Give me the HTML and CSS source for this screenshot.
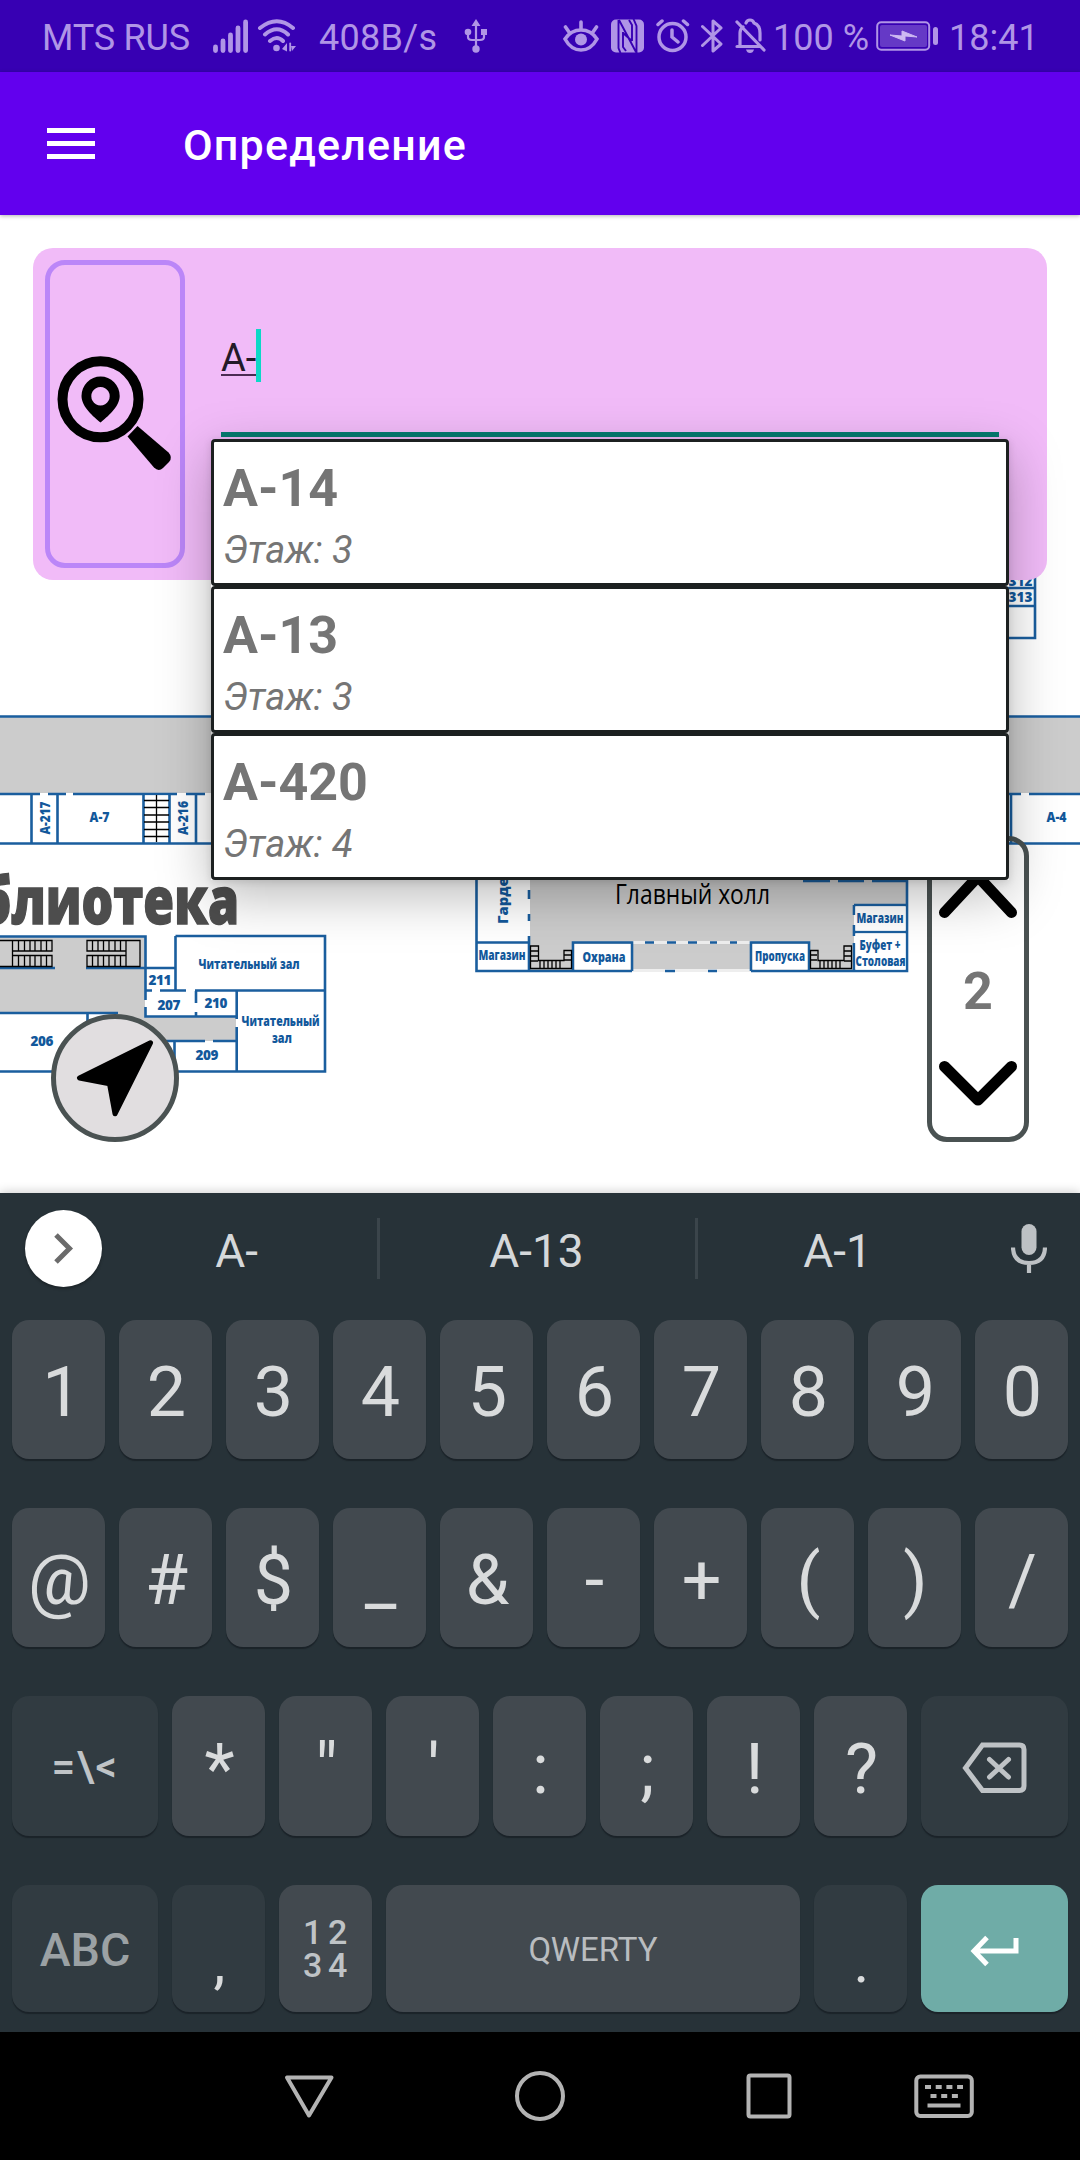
FILE: index.html
```html
<!DOCTYPE html>
<html lang="ru">
<head>
<meta charset="utf-8">
<title>Определение</title>
<link rel="stylesheet" href="styles.css">
</head>
<body>
<div class="phone">
  <header class="status">
    <span class="carrier">MTS RUS</span>
    <svg class="signal" width="36" height="34" viewBox="0 0 36 34"><g stroke="currentColor" stroke-width="4.8" stroke-linecap="round"><path d="M2.5 28v3.5M10 22v9.5M17.5 16v15.500M25 9v22.500M32.600 3v28.500"/></g></svg>
    <svg class="wifi" width="40" height="34" viewBox="0 0 40 34" fill="none" stroke="currentColor" stroke-width="4" stroke-linecap="round"><path d="M3 9Q20 -4.500 36 9M8 15.500Q20 5 31 15.500M13 22Q20 16 26 22"/><circle cx="19.500" cy="29" r="3.300" fill="currentColor" stroke="none"/><path d="M25 30l5-6v8.500zM34 24v8.500M34 27l5 0-4 5z" fill="currentColor" stroke="none"/><path d="M33.200 24.500v7" stroke-width="1.800"/></svg>
    <span class="speed">408B/s</span>
    <svg class="usb" width="24" height="36" viewBox="0 0 24 36" fill="none" stroke="currentColor" stroke-width="2.200"><path d="M12 5v25M4 14v5q0 3 4 3h8q4 0 4-3v-5"/><path d="M12 1l4.500 7h-9zM17 11h6v6h-6z" fill="currentColor" stroke="none"/><circle cx="4" cy="14" r="3.300" fill="currentColor" stroke="none"/><circle cx="12" cy="31" r="3.700" fill="currentColor" stroke="none"/></svg>
    <svg class="eye" width="36" height="34" viewBox="0 0 36 34" fill="none" stroke="currentColor" stroke-width="3.600" stroke-linecap="round"><path d="M2 20Q8 11 18 11t16 9Q28 31 18 31T2 20zM18 10V3M6 13L2.500 8M30 13l3.500-5"/><circle cx="18" cy="20.500" r="6" fill="currentColor" stroke="none"/></svg>
    <svg class="nfc" width="33" height="34" viewBox="0 0 33 34"><rect y=".5" width="33" height="33" rx="5" fill="currentColor"/><path d="M7.500 1V29L9.500 34M25.500 34V7L22.500 0M8 1L25 33M12 13V28L15 32M21 22V6L18 1M12 14L21 22" fill="none" stroke="#3700b3" stroke-width="1.900"/></svg>
    <svg class="alarm" width="34" height="34" viewBox="0 0 34 34" fill="none" stroke="currentColor" stroke-width="3.500" stroke-linecap="round"><circle cx="16.500" cy="18" r="13.500"/><path d="M16 11v7l6 5M2 5.500l4-3.500M31.500 5.500L27.500 2"/></svg>
    <svg class="bt" width="22" height="36" viewBox="0 0 22 36" fill="none" stroke="currentColor" stroke-width="3"><path d="M1.500 8.500L20 26l-8 7V3l8 7L1.500 27.500" stroke-linejoin="round" stroke-linecap="round"/></svg>
    <svg class="bell" width="32" height="36" viewBox="0 0 32 36" fill="none" stroke="currentColor" stroke-width="3.200" stroke-linecap="round"><path d="M2 4l27 28M2 28.500h22M5 27V15q0-4 3-6M11 5q1-3 4-3t4 3q6 2 6 10v7"/><path d="M11 31.500h8q-1 3.500-4 3.500t-4-3.500z" fill="currentColor" stroke="none"/></svg>
    <span class="percent">100 %</span>
    <svg class="battery" width="63" height="32" viewBox="0 0 63 32"><rect x="1.200" y="2.200" width="52" height="27.600" rx="4" fill="none" stroke="currentColor" stroke-width="2"/><rect x="4" y="5" width="47" height="22" rx="2" fill="currentColor" opacity=".38"/><path d="M14 15l12 1 0-5 15 6-12-1 0 5z" fill="#cdb9f2" stroke="#cdb9f2"/><rect x="57" y="7" width="5" height="18" rx="2.500" fill="currentColor"/></svg>
    <span class="clock">18:41</span>
  </header>

  <div class="toolbar">
    <div class="burger"><i></i><i></i><i></i></div>
    <h1>Определение</h1>
  </div>

  <main class="stage">
    <svg class="map" width="1080" height="978" viewBox="0 215 1080 978">
      <rect x="0" y="717" width="1080" height="76" class="hall"/>
      <rect x="0" y="937" width="145" height="76" class="hall"/>
      <path d="M118 1010h27v7h91v24H118z" class="hall"/>
      <path d="M530 870h377v35h-53v66H530z" class="hall"/>
      <path d="M632 970.500h119M632 942.500h119" stroke="#eee" stroke-width="3"/>
      <path d="M477.500 870h50.500v72h-50.500z" fill="#fff"/>
      <g class="wall">
        <path d="M0 716.500H1080M0 843.500H1080M0 794H40M48 794H66M73 794H177M186 794H205M1000 794H1021M1029 794H1080M31.500 794V843M57.500 794V843M143.500 794V843M169.500 794V843M196 794V843M1011 794V843"/>
        <path d="M1000 588H1035M1000 606H1035M1000 638H1035V570"/>
        <path d="M0 936.500H145.500V1000M145.500 1007V1016.500H236M0 968H55M86 968H175M175.500 936H325V1071.500H0M175.500 936V990.500M145 990.500H152M160 990.500H186M195 990.500H325M196 991V1003M196 1012V1016M236.700 991V1019M236.700 1027V1071M0 1013H118M87.500 1013V1071M165 1041H205M213 1041H236M174.500 1041V1071"/>
        <path d="M476.500 870V971H632M529 890V899M529 914V921M529 936V971M476 942.500H529M573 971V942.500H632V971M751 971V942.500H809V971M751 971H907V870M854 905H907M854 932H907M854 905V915M854 925V936M854 943V971"/>
        <path d="M645 942.500h9M667 942.500h9M688 942.500h9M710 942.500h7M730 942.500h7M665 971h10M708 971h9M803 881h27M838 881h26M872 881h35"/>
      </g>
      <path d="M574.500 944h56v25.500h-56zM752.500 944h55v25.500h-55zM855.500 906.500h50v24h-50zM855.500 933.500h50v36h-50zM145 795.500h23v46.500h-23z" fill="#fff"/>
      <g class="stair">
        <path d="M156.500 795V842M144 800.500H169M144 807.500H169M144 815H169M144 822H169M144 829.500H169M144 836.500H169"/>
        <path d="M0 940.500H52V951H12.500V940M12.500 951V967M12.500 955.500H52V966.500H0M18.500 940v11M24.500 940v11M30 940v11M35 940v11M41 940v11M46.500 940v11M18.500 955v11M24.500 955v11M30 955v11M35 955v11M41 955v11M46.500 955v11"/>
        <path d="M126 951H87V940.500H140V966.500H87V955.500H126M126 940V967M92.500 940v11M98 940v11M103.500 940v11M109 940v11M115 940v11M120.500 940v11M92.500 955v11M98 955v11M103.500 955v11M109 955v11M115 955v11M120.500 955v11"/>
        <path d="M530.500 968.500V946H538.500V960.500H564V950.500H571.500V968.500zM530 951h8M530 956h8M530 961h8M564 955h7M564 960h7M540 960v8M544 960v8M548 960v8M552 960v8M556 960v8M560 960v8"/>
        <path d="M810.500 968.500V950.500H818V960.500H844V946H851.500V968.500zM810 955h7M810 960h7M844 951h7M844 956h7M844 961h7M820 960v8M824 960v8M828 960v8M832 960v8M836 960v8M840 960v8"/>
      </g>
      <g class="room">
        <text x="44.500" y="823" textLength="33" lengthAdjust="spacingAndGlyphs" transform="rotate(-90 44.500 818)">А-217</text>
        <text x="182.500" y="823" textLength="34" lengthAdjust="spacingAndGlyphs" transform="rotate(-90 182.500 818)">А-216</text>
        <text x="99.500" y="821.500" textLength="20" lengthAdjust="spacingAndGlyphs">А-7</text>
        <text x="1056.500" y="822" textLength="20" lengthAdjust="spacingAndGlyphs">А-4</text>
        <text x="1020.500" y="585.500" textLength="24">312</text>
        <text x="1020.500" y="601.500" textLength="24">313</text>
        <text x="249" y="969" textLength="101" lengthAdjust="spacingAndGlyphs">Читательный зал</text>
        <text x="160" y="985" textLength="23">211</text>
        <text x="169" y="1009.500" textLength="23">207</text>
        <text x="216" y="1008" textLength="23">210</text>
        <text x="280.500" y="1026" textLength="78" lengthAdjust="spacingAndGlyphs">Читательный</text>
        <text x="282" y="1043" textLength="20" lengthAdjust="spacingAndGlyphs">зал</text>
        <text x="207" y="1060" textLength="23">209</text>
        <text x="42" y="1045.500" textLength="23">206</text>
        <text x="502" y="960" textLength="47" lengthAdjust="spacingAndGlyphs">Магазин</text>
        <text x="604" y="962" textLength="43" lengthAdjust="spacingAndGlyphs">Охрана</text>
        <text x="780" y="961" textLength="50" lengthAdjust="spacingAndGlyphs">Пропуска</text>
        <text x="880" y="923" textLength="47" lengthAdjust="spacingAndGlyphs">Магазин</text>
        <text x="880" y="950" textLength="41" lengthAdjust="spacingAndGlyphs">Буфет +</text>
        <text x="880.500" y="966" textLength="50" lengthAdjust="spacingAndGlyphs">Столовая</text>
        <text class="wardrobe" transform="translate(507.500 924) rotate(-90)" textLength="75" lengthAdjust="spacingAndGlyphs">Гардероб</text>
      </g>
      <text class="lobby" x="692.500" y="904" textLength="155" lengthAdjust="spacingAndGlyphs">Главный холл</text>
      <text class="library" x="239" y="924" textLength="260" lengthAdjust="spacingAndGlyphs">блиотека</text>
    </svg>

    <section class="search">
      <button class="find">
        <svg width="140" height="308" viewBox="45 260 140 308"><circle cx="100.500" cy="399.300" r="38" fill="none" stroke="#000" stroke-width="10"/><path fill-rule="evenodd" d="M100.500 422.500C94 417 81.500 407 81.500 396a19 19.300 0 0 1 38.200 0C119.700 407 107 417 100.500 422.500zM100.500 387a9.200 9.200 0 1 0 .01 0z"/><path d="M137.500 426L127.500 436.500L154 467.500Q158.500 472 163 468L169 462Q173 457.500 168.500 452.500z"/></svg>
      </button>
      <div class="field"><span class="typed">А-</span><i class="caret"></i></div>
    </section>

    <ul class="options">
      <li><b>А-14</b><em>Этаж: 3</em></li>
      <li><b>А-13</b><em>Этаж: 3</em></li>
      <li><b>А-420</b><em>Этаж: 4</em></li>
    </ul>

    <button class="locate"><svg width="128" height="128" viewBox="51 1013.700 128 128"><path d="M150.500 1042.500L79.500 1077.700L109.500 1083.500L115 1113.500z" stroke="#000" stroke-width="5" stroke-linejoin="round"/></svg></button>

    <div class="floors">
      <svg width="78" height="52" viewBox="0 0 78 52"><path d="M5.500 44.500L39 8.500L72.500 44.500"/></svg>
      <b>2</b>
      <svg width="78" height="52" viewBox="0 0 78 52"><path d="M5.500 7.500L39 41L72.500 7.500"/></svg>
    </div>
  </main>

  <section class="keyboard">
    <div class="suggest">
      <span class="expand"><svg width="77" height="77" viewBox="0 0 77 77"><path d="M31 25L44.500 38.500L31 52" fill="none" stroke="#6b6b6b" stroke-width="5"/></svg></span>
      <span class="word w1">A-</span><i></i><span class="word w2">A-13</span><i></i><span class="word w3">A-1</span>
      <svg class="mic" width="36" height="50" viewBox="0 0 36 50"><rect x="10.500" y="0" width="15" height="31" rx="7.500" fill="#bdc1c4"/><path d="M2 23.500Q2.500 39 18 39T34 23.500M18 39V49" fill="none" stroke="#bdc1c4" stroke-width="4.200"/></svg>
    </div>
    <div class="row"><kbd class="one">1</kbd><kbd>2</kbd><kbd>3</kbd><kbd>4</kbd><kbd>5</kbd><kbd>6</kbd><kbd>7</kbd><kbd>8</kbd><kbd>9</kbd><kbd>0</kbd></div>
    <div class="row"><kbd>@</kbd><kbd>#</kbd><kbd>$</kbd><kbd>_</kbd><kbd>&amp;</kbd><kbd>-</kbd><kbd>+</kbd><kbd>(</kbd><kbd>)</kbd><kbd>/</kbd></div>
    <div class="row row3"><kbd class="wide dim sym">=\&lt;</kbd><kbd>*</kbd><kbd>"</kbd><kbd>'</kbd><kbd>:</kbd><kbd>;</kbd><kbd>!</kbd><kbd>?</kbd><kbd class="wide dim icon"><svg width="66" height="52" viewBox="0 0 66 52" fill="none" stroke="#bfc3c6" stroke-width="5"><path d="M20.500 3H57.500Q62 3 62 7.500V44Q62 48.500 57.500 48.500H20.500L3.500 26zM27.500 17.500L46.500 35M46.500 17.500L27.500 35" stroke-linecap="round"/></svg></kbd></div>
    <div class="row row4"><kbd class="wide dim abc">ABC</kbd><kbd class="dim punct">,</kbd><kbd class="nums"><span>1</span><span>2</span><span>3</span><span>4</span></kbd><kbd class="space">QWERTY</kbd><kbd class="dim punct">.</kbd><kbd class="wide enter icon"><svg width="50" height="32" viewBox="0 0 50 32" fill="none" stroke="#fff" stroke-width="5"><path d="M17 2.500L4 16L17 29.500M4 16H46V3"/></svg></kbd></div>
  </section>

  <nav class="nav">
    <svg width="1080" height="128" viewBox="0 2032 1080 128" fill="none" stroke="#b3b3b3" stroke-width="4" stroke-linejoin="round"><path d="M287 2077.500H331.500L309 2115.500z"/><circle cx="540" cy="2096" r="23"/><rect x="748.500" y="2075.500" width="41" height="41" rx="2"/><rect x="916.300" y="2076.500" width="55.500" height="39.500" rx="4"/><path d="M925 2087h38M930.500 2096h29" stroke-dasharray="6 4.700"/><path d="M927.500 2105.500h33"/></svg>
  </nav>
</div>
</body>
</html>
```
FILE: styles.css
```css
* { box-sizing: border-box; }
body { margin: 0; font-family: Roboto, "Noto Sans", sans-serif; }
button { padding: 0; border: 0; background: none; }
svg { display: block; flex: none; }
.phone { width: 1080px; height: 2160px; display: flex; flex-direction: column; overflow: hidden; background: #fff; }

.status { height: 72px; flex: none; background: #3700b3; color: #b095e6; display: flex; align-items: center; padding-left: 42px; font-size: 36px; line-height: 72px; white-space: nowrap; }
.status span { padding-top: 2px; height: 72px; flex: none; }
.carrier { width: 171px; letter-spacing: -.2px; }
.wifi { margin-left: 8px; }
.speed { margin-left: 22px; width: 125px; letter-spacing: .3px; }
.usb { margin-left: 20px; }
.eye { margin-left: 75px; }
.nfc { margin-left: 12px; }
.alarm { margin-left: 12px; }
.bt { margin-left: 11px; }
.bell { margin-left: 12px; }
.percent { margin-left: 6px; width: 103px; }
.battery { margin-left: 0; }
.clock { margin-left: 10px; }

.toolbar { height: 143px; flex: none; background: #6200ee; display: flex; align-items: center; padding-left: 47px; color: #fff; position: relative; z-index: 2; box-shadow: 0 1px 4px rgba(0,0,0,.3); }
.burger { width: 48px; display: flex; flex-direction: column; gap: 8px; margin-top: -1px; }
.burger i { height: 5px; background: #fff; }
.toolbar h1 { margin: 3px 0 0 88px; font-size: 43px; font-weight: 500; letter-spacing: 1.2px; }

.stage { height: 978px; flex: none; position: relative; padding: 33px; }
.map { position: absolute; left: 0; top: 0; }
.hall { fill: #ccc; }
.wall { fill: none; stroke: #1a5e9e; stroke-width: 2.600; }
.stair { fill: none; stroke: #000; stroke-width: 1.300; }
.room { font: 800 13.5px "Open Sans", sans-serif; fill: #12589b; text-anchor: middle; }
.room .wardrobe { text-anchor: start; }
.lobby { font: 28px "Open Sans", sans-serif; text-anchor: middle; }
.library { font: 800 65px "Open Sans", sans-serif; fill: #4d4d4d; stroke: #4d4d4d; stroke-width: 1.5px; text-anchor: end; }

.search { position: relative; height: 332px; width: 1014px; border-radius: 20px; background: #f1bbf8; padding: 12px; display: flex; }
.find { width: 140px; height: 308px; border: 5px solid #bb86f8; border-radius: 20px; display: grid; place-content: center; }
.field { width: 778px; height: 177px; margin-left: 36px; border-bottom: 5px solid #077b70; display: flex; align-items: flex-start; padding-top: 69px; font-size: 38px; color: #241a28; }
.typed { line-height: 41px; height: 48px; margin-top: -1px; padding-top: 10px; width: 36px; border-bottom: 2px solid #4b2b53; white-space: nowrap; }
.caret { width: 5px; height: 53px; margin-left: -1px; background: #0dd8c7; }

.options { position: absolute; z-index: 1; left: 211px; top: 224px; width: 798px; margin: 0; padding: 0; list-style: none; color: #757575; box-shadow: 0 16px 50px rgba(0,0,0,.27), 0 2px 8px rgba(0,0,0,.12); }
.options li { height: 147px; background: #fff; border: 3px solid #1c2020; border-radius: 4px; padding: 16px 9px 0; display: flex; flex-direction: column; }
.options b { font-size: 52px; line-height: 61px; }
.options em { font-size: 38px; line-height: 45px; margin-top: 9px; }

.locate { position: absolute; left: 51px; top: 799px; width: 128px; height: 128px; border: 5px solid #4a5252; border-radius: 50%; background: #e1dee0; display: grid; place-content: center; }
.floors { position: absolute; left: 927px; top: 621px; width: 102px; height: 306px; border: 5px solid #4a5252; border-radius: 20px; display: flex; flex-direction: column; align-items: center; justify-content: space-between; padding: 27px 0 26px; color: #757575; }
.floors b { font-size: 52px; line-height: 60px; margin-top: 5px; }
.floors path { fill: none; stroke: #000; stroke-width: 11; stroke-linecap: round; stroke-linejoin: round; }

.keyboard { height: 839px; flex: none; background: #273238; padding: 0 12px; color: #d9dbdc; position: relative; box-shadow: 0 -1px 10px rgba(0,0,0,.2); }
.suggest { height: 127px; display: flex; align-items: center; padding: 0 0 16px 13px; font-size: 46px; color: #d5d8da; }
.suggest i { width: 3px; height: 61px; background: #3b454b; }
.expand { width: 77px; height: 77px; border-radius: 50%; background: #fff; box-shadow: 0 2px 3px rgba(0,0,0,.3); }
.word { text-align: center; padding-top: 5px; }
.w1 { width: 269px; margin-left: 6px; padding-right: 12px; }
.w2 { width: 315px; padding-right: 2px; }
.w3 { width: 275px; padding-left: 4px; }
.mic { margin-left: 38px; }
.row { display: grid; grid-template-columns: repeat(10, 93px); column-gap: 14px; height: 139px; margin-bottom: 49px; }
.row3 { height: 140px; grid-template-columns: 146px repeat(7, 93px) 147px; }
.row4 { height: 127px; margin: 0; grid-template-columns: 146px 93px 93px 414px 93px 147px; }
kbd { display: flex; align-items: center; justify-content: center; padding: 5px 0 0 2px; font: 70px Roboto, sans-serif; background: #42494f; border-radius: 17px; box-shadow: 0 2px 1px #1b2329; }
.one { padding-left: 7px; }
.dim { background: #313b41; }
.sym { font-size: 42px; font-weight: 500; letter-spacing: 1.5px; color: #bfc3c6; padding: 0; }
.abc { font-size: 46.5px; font-weight: 500; color: #9ba1a4; padding: 3px 0 0; }
.icon { padding: 4px 0 0; }
.punct { font-size: 60px; padding-top: 26px; }
.space { font-size: 33px; color: #b9bcbf; padding: 1px 0 0; }
.nums { display: grid; grid-template-columns: 20px 20px; column-gap: 5px; align-content: center; justify-content: center; font-size: 34px; line-height: 33px; font-weight: 500; color: #bfc3c6; padding: 1px 0 0; }
.enter { background: #6faca7; }
.nav { height: 128px; flex: none; background: #000; }
```
